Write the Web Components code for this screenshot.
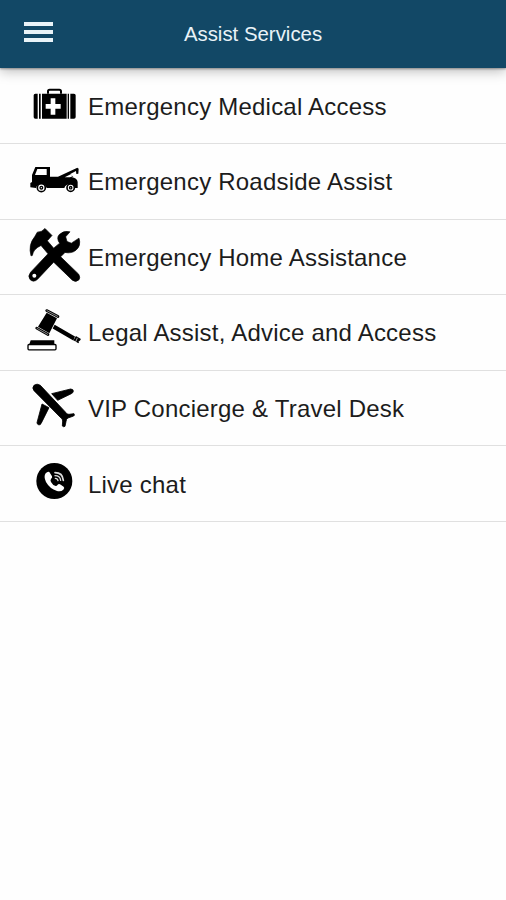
<!DOCTYPE html>
<html lang="en">
<head>
<meta charset="utf-8">
<title>Assist Services</title>
<style>
  body {
    background: #fefefe;
    font-family: "Liberation Sans", Arial, sans-serif;
    margin: 0;
  }
</style>
</head>
<body>
<assist-app></assist-app>

<script>
// every icon is drawn on the same 210 unit wide board, dy sets it in its row
const icons = {
  medical: {
    dy: 30,
    body: `
      <path d="M84 44v-7q0-5 5-5h29q5 0 5 5v7" fill="none" stroke="#000" stroke-width="6"/>
      <path d="M46 44h7v75h-7q-5 0-5-5V49q0-5 5-5zM57 44h5v75h-5zM66 44h74v75H66zM143 44h4v75h-4zM151 44h11q5 0 5 5v65q0 5-5 5h-11z"/>
      <path d="M92 58h14v17h16v14h-16v18H92V89H77V75h15z" fill="#fff"/>`
  },
  roadside: {
    dy: 34,
    body: `
      <path d="M46 35h44v29h24l58-27 4 3-1 15-6 1-1-9-17 9 9 9h-6q18 3 19 15v18h-9q-4-11-15-11-12 0-16 11H80q-4-12-17-12-12 0-15 12l-17-2V83l5-3V59z"/>
      <path d="M52 41h28v18H45z" fill="#fff"/>
      <path d="m134 66 18-9 6 6-8 3z" fill="#fff"/>
      <g fill="#fff" stroke="#000">
        <circle cx="64" cy="97" r="12" stroke-width="5"/>
        <circle cx="152" cy="97" r="11" stroke-width="5"/>
        <circle cx="64" cy="97" r="4" stroke-width="4"/>
        <circle cx="152" cy="97" r="3.5" stroke-width="4"/>
      </g>`
  },
  home: {
    dy: 2.4,
    body: `
      <path d="M75 23 96 44 82 60l19 22 18-15q-11-15-1-26 13-13 32-8l-13 15 4 14 13 5 23-15q7 23-9 36-13 11-33 7l-13 13 54 52q6 10 1 17-9 9-20 1l-56-54-49 52q-12 10-22 0-8-10 2-22l52-55-21-25q-23 10-26 30l-4 1q-9-33 11-57l8-14q14 0 23-11z" stroke="#000" stroke-width="2" stroke-linejoin="round"/>
      <circle cx="43" cy="165" r="6" fill="#fff"/>`
  },
  legal: {
    dy: 15.6,
    body: `
      <path d="m80 38 31 16-23 45-34-19zM104 74l61 35-5 12-62-36z"/>
      <g stroke="#000" stroke-linecap="round" fill="none">
        <path d="m80 31 34 18M50 84l34 19" stroke-width="8"/>
        <path d="m164 114 15 9" stroke-width="15" stroke-linecap="butt"/>
      </g>
      <path d="m80 31 34 18M50 84l34 19" stroke="#fff" stroke-width="1.6" fill="none"/>
      <path d="m172 113-5 12" stroke="#fff" stroke-width="2"/>
      <circle cx="178" cy="124" r="2" fill="#fff"/>
      <path d="M32 120h71v12H28z"/>
      <rect x="24" y="133" width="84" height="16" rx="3" fill="#fff" stroke="#000" stroke-width="4"/>`
  },
  travel: {
    dy: 14,
    body: `
      <path d="M42 29q9-7 19 0l75 80q4 8 11 7l15-2q3 5-1 7l-17 6q-6 3-6 11l-3 14q-4 3-8-1l1-15q1-6-8-12L42 45q-7-8 0-16zM95 54l57-14q9 1 8 7-1 5-6 7l-41 20zM66 85l21 11-24 48q-3 5-8 3-4-2-4-6z" stroke="#000" stroke-width="2.5" stroke-linejoin="round"/>`
  },
  chat: {
    dy: 12,
    body: `
      <circle cx="103" cy="93" r="54"/>
      <path d="M77 70q6-7 11-4l8 13q2 4-3 8-3 4 0 9 6 11 14 12 4 0 6-4 3-3 7-1l11 7q4 3-1 9-7 7-19 4-22-7-33-27-8-16-1-26z" fill="#fff"/>
      <g fill="none" stroke="#ddd" stroke-linecap="round">
        <path d="M105 68q23 0 25 23" stroke-width="5"/>
        <path d="M105 77q15 0 17 14" stroke-width="4"/>
        <path d="M106 85q7 0 8 7" stroke-width="4"/>
      </g>`
  }
}

class AssistIcon extends HTMLElement {
  constructor() {
    super()
    this.attachShadow({ mode: "open" })
  }

  connectedCallback() {
    const icon = icons[this.getAttribute("name")]
    this.shadowRoot.innerHTML = `
      <style>
        :host {
          display: block;
          flex: none;
          height: 100%;
          width: 88px;
        }
        svg {
          display: block;
          height: 75.6px;
          width: 88px;
        }
      </style>
      <svg viewBox="0 0 264 226.8" aria-hidden="true">
        <g transform="translate(60 ${icon.dy})">${icon.body}</g>
      </svg>
    `
  }
}
customElements.define("assist-icon", AssistIcon)

class AssistHeader extends HTMLElement {
  constructor() {
    super()
    this.attachShadow({ mode: "open" })
    this.shadowRoot.innerHTML = `
      <style>
        :host {
          align-items: center;
          background: #124866;
          box-shadow: 0 1px 2px rgb(0 0 0 / 35%), 0 3px 12px rgb(0 0 0 / 28%);
          box-sizing: border-box;
          color: #e9f3f8;
          display: grid;
          grid-template-columns: 80px 1fr 80px;
          height: 67.5px;
          position: relative;
          z-index: 1;
        }
        button {
          background: none;
          border: 0;
          display: flex;
          flex-direction: column;
          gap: 3.6px;
          margin: 0;
          padding: 0 0 3px 24.3px;
        }
        i {
          background: #e9f3f8;
          display: block;
          height: 4.4px;
          width: 29px;
        }
        h1 {
          font-size: 20.4px;
          font-weight: normal;
          line-height: 24px;
          margin: 0;
          text-align: center;
        }
      </style>
      <button aria-label="Menu"><i></i><i></i><i></i></button>
      <h1><slot></slot></h1>
    `
  }
}
customElements.define("assist-header", AssistHeader)

class AssistRow extends HTMLElement {
  constructor() {
    super()
    this.attachShadow({ mode: "open" })
  }

  connectedCallback() {
    this.shadowRoot.innerHTML = `
      <style>
        :host {
          align-items: center;
          border-bottom: 1.6px solid #e0e0e0;
          box-sizing: border-box;
          color: #1c1c1c;
          display: flex;
          height: 75.6px;
        }
        span {
          font-size: 24px;
          letter-spacing: .22px;
          line-height: 28px;
          padding-top: 1.6px;
          white-space: nowrap;
        }
      </style>
      <assist-icon name="${this.getAttribute("icon")}"></assist-icon>
      <span><slot></slot></span>
    `
  }
}
customElements.define("assist-row", AssistRow)

class AssistApp extends HTMLElement {
  constructor() {
    super()
    this.attachShadow({ mode: "open" })
    this.shadowRoot.innerHTML = `
      <style>
        :host {
          display: block;
          min-height: 100vh;
        }
        main {
          padding-top: 1px;
        }
      </style>
      <assist-header>Assist Services</assist-header>
      <main>
        <assist-row icon="medical">Emergency Medical Access</assist-row>
        <assist-row icon="roadside">Emergency Roadside Assist</assist-row>
        <assist-row icon="home">Emergency Home Assistance</assist-row>
        <assist-row icon="legal">Legal Assist, Advice and Access</assist-row>
        <assist-row icon="travel">VIP Concierge &amp; Travel Desk</assist-row>
        <assist-row icon="chat">Live chat</assist-row>
      </main>
    `
  }
}
customElements.define("assist-app", AssistApp)
</script>
</body>
</html>
